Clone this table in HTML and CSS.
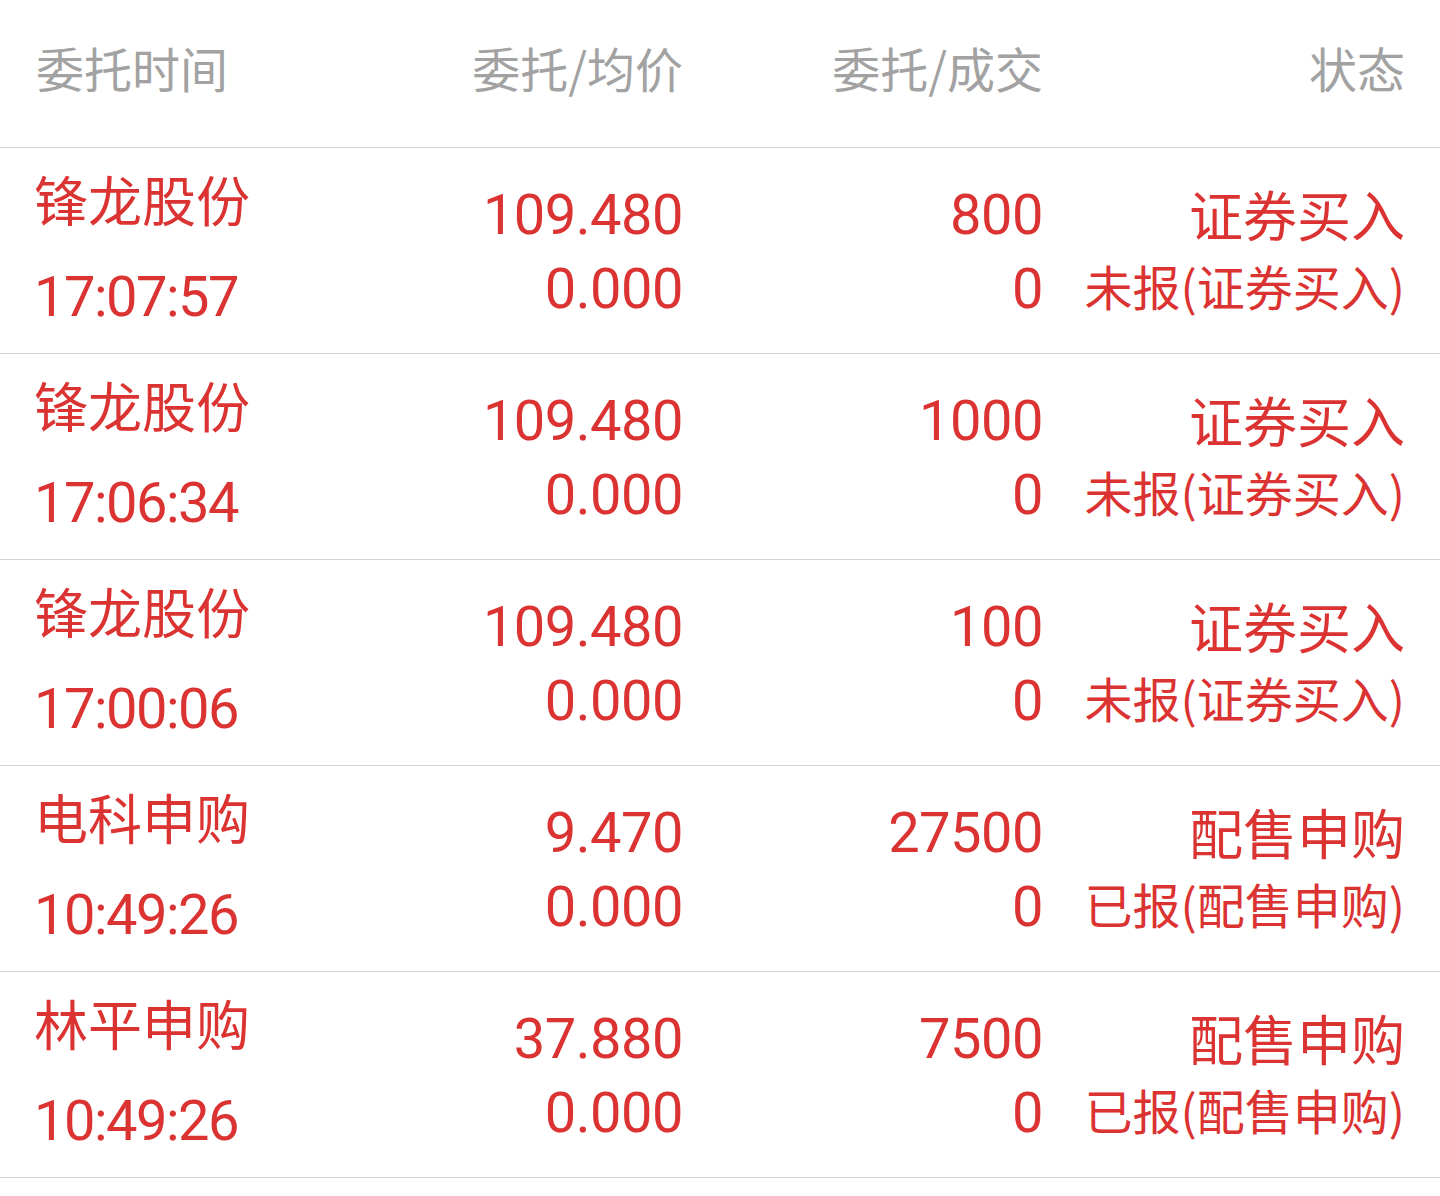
FILE: index.html
```html
<!DOCTYPE html>
<html lang="zh-CN">
<head>
<meta charset="utf-8">
<title>委托列表</title>
<link rel="stylesheet" href="styles.css">
</head>
<body>
<div class="table">
  <div class="head">
    <div class="hc c1">委托时间</div>
    <div class="hc c2">委托/均价</div>
    <div class="hc c3">委托/成交</div>
    <div class="hc c4">状态</div>
  </div>

  <div class="row">
    <div class="cell c1"><div class="name">锋龙股份</div><div class="time">17:07:57</div></div>
    <div class="cell c2 num"><div class="ln">109.480</div><div class="ln">0.000</div></div>
    <div class="cell c3 num"><div class="ln">800</div><div class="ln">0</div></div>
    <div class="cell c4"><div class="s1">证券买入</div><div class="s2">未报(证券买入)</div></div>
  </div>

  <div class="row">
    <div class="cell c1"><div class="name">锋龙股份</div><div class="time">17:06:34</div></div>
    <div class="cell c2 num"><div class="ln">109.480</div><div class="ln">0.000</div></div>
    <div class="cell c3 num"><div class="ln">1000</div><div class="ln">0</div></div>
    <div class="cell c4"><div class="s1">证券买入</div><div class="s2">未报(证券买入)</div></div>
  </div>

  <div class="row">
    <div class="cell c1"><div class="name">锋龙股份</div><div class="time">17:00:06</div></div>
    <div class="cell c2 num"><div class="ln">109.480</div><div class="ln">0.000</div></div>
    <div class="cell c3 num"><div class="ln">100</div><div class="ln">0</div></div>
    <div class="cell c4"><div class="s1">证券买入</div><div class="s2">未报(证券买入)</div></div>
  </div>

  <div class="row">
    <div class="cell c1"><div class="name">电科申购</div><div class="time">10:49:26</div></div>
    <div class="cell c2 num"><div class="ln">9.470</div><div class="ln">0.000</div></div>
    <div class="cell c3 num"><div class="ln">27500</div><div class="ln">0</div></div>
    <div class="cell c4"><div class="s1">配售申购</div><div class="s2">已报(配售申购)</div></div>
  </div>

  <div class="row">
    <div class="cell c1"><div class="name">林平申购</div><div class="time">10:49:26</div></div>
    <div class="cell c2 num"><div class="ln">37.880</div><div class="ln">0.000</div></div>
    <div class="cell c3 num"><div class="ln">7500</div><div class="ln">0</div></div>
    <div class="cell c4"><div class="s1">配售申购</div><div class="s2">已报(配售申购)</div></div>
  </div>
</div>
</body>
</html>
```

FILE: styles.css
```css
html, body {
  margin: 0;
  padding: 0;
  background: #ffffff;
}

body {
  font-family: "Noto Sans CJK SC", "Noto Sans", sans-serif;
  color: #db3232;
}

.table {
  width: 1440px;
}

.head,
.row {
  display: grid;
  grid-template-columns: 287px 360px 360px 1fr;
  padding: 0 35px 0 36px;
  border-bottom: 1px solid #d4d4d4;
  align-items: start;
}

.head {
  padding-top: 34px;
  box-sizing: content-box;
  height: 113px;
}

.hc {
  font-size: 48px;
  line-height: 66px;
  color: #a2a2a2;
  white-space: nowrap;
}

.row {
  height: 205px;
}

.c1 { text-align: left; }
.c2, .c3, .c4 { text-align: right; }

.cell { white-space: nowrap; }

.cell.c1 {
  padding-top: 2px;
  margin-left: -2px;
}

.name {
  font-size: 54px;
  line-height: 98px;
}

.time {
  font-family: Roboto, "Noto Sans", sans-serif;
  font-size: 56px;
  line-height: 98px;
  letter-spacing: -1.5px;
}

.num {
  font-family: Roboto, "Noto Sans", sans-serif;
  font-size: 56px;
  padding-top: 30px;
  letter-spacing: -0.5px;
}

.num .ln {
  line-height: 74px;
}

.cell.c4 {
  padding-top: 29px;
}

.s1 {
  font-size: 54px;
  line-height: 73px;
}

.s2 {
  font-size: 48px;
  line-height: 71px;
}
```
